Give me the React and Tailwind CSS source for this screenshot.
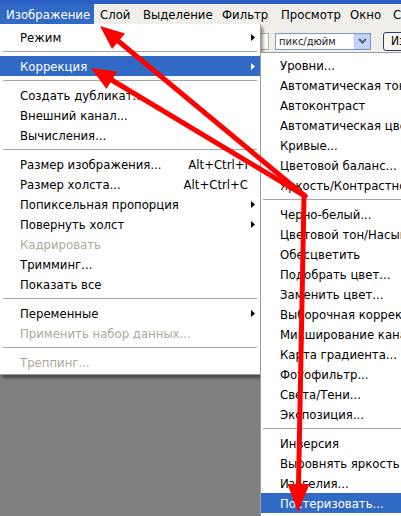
import React from "react";

const FONT = "font-['DejaVu_Sans_Condensed','Liberation_Sans',sans-serif]";

function Tri({ white }) {
  return (
    <svg width="4" height="7" viewBox="0 0 4 7" className="shrink-0">
      <polygon points="0,0 4,3.5 0,7" fill={white ? "#ffffff" : "#000000"} />
    </svg>
  );
}

function Item({ label, shortcut, arrow, disabled, active }) {
  const tone = active
    ? "bg-[#316ac5] text-white"
    : disabled
    ? "text-[#aca899]"
    : "text-black";
  return (
    <div className={`h-[20px] flex items-center pl-[20px] pr-[5px] ${tone}`}>
      <span className="flex-1 whitespace-nowrap">{label}</span>
      {shortcut && <span className="whitespace-nowrap mr-[7px]">{shortcut}</span>}
      {arrow && <Tri white={active} />}
    </div>
  );
}

function SubItem({ label, active }) {
  const tone = active ? "bg-[#316ac5] text-white" : "text-black";
  return (
    <div className={`h-[20px] flex items-center pl-[19px] ${tone}`}>
      <span className="whitespace-nowrap">{label}</span>
    </div>
  );
}

function Sep() {
  return (
    <div className="h-[9px] flex items-center px-[3px]">
      <div className="h-px w-full bg-[#a6a6a6]" />
    </div>
  );
}

function SubSep() {
  return (
    <div className="h-[9px] flex items-center px-[2px]">
      <div className="h-px w-full bg-[#a6a6a6]" />
    </div>
  );
}

export default function App() {
  return (
    <div className={`relative w-[401px] h-[516px] overflow-hidden bg-[#808080] flex flex-col text-[13px] leading-none ${FONT}`}>
      {/* title bar edge */}
      <div className="h-[4px] bg-[#2c5ec8] shrink-0" />
      {/* menu bar */}
      <div className="h-[20px] bg-[#f0efea] flex items-stretch text-black shrink-0 whitespace-nowrap">
        <div className="w-[94px] shrink-0 pl-[6px] flex items-center bg-[#316ac5] text-white">Изображение</div>
        <div className="w-[43px] shrink-0 pl-[6px] flex items-center">Слой</div>
        <div className="w-[79px] shrink-0 pl-[6px] flex items-center">Выделение</div>
        <div className="w-[59px] shrink-0 pl-[6px] flex items-center">Фильтр</div>
        <div className="w-[69px] shrink-0 pl-[6px] flex items-center">Просмотр</div>
        <div className="w-[43px] shrink-0 pl-[6px] flex items-center">Окно</div>
        <div className="shrink-0 pl-[6px] flex items-center">С</div>
      </div>
      {/* options bar */}
      <div className="h-[31px] bg-[#efeee8] flex items-center pl-[240px] pt-[3px] shrink-0">
        <div className="shrink-0 w-[29px] h-[17px] bg-white border border-[#b5b2a8]" />
        <div className="shrink-0 ml-[6px] w-[96px] h-[17px] bg-white border border-[#7f9db9] flex items-center">
          <span className="flex-1 pl-[3px] text-[11px] text-[#222] whitespace-nowrap">пикс/дюйм</span>
          <div className="w-[16px] h-[15px] bg-[#c4d5f8] border border-[#b9cbf3] flex items-center justify-center">
            <svg width="9" height="6" viewBox="0 0 9 6">
              <polyline points="1,1 4.5,4.5 8,1" fill="none" stroke="#4d6185" strokeWidth="2" />
            </svg>
          </div>
        </div>
        <div className="shrink-0 ml-[12px] w-[40px] h-[19px] rounded-[3px] border border-[#2f3f6a] bg-[#f6f5f0] flex items-center pl-[7px] text-[12px] text-black">
          Из
        </div>
      </div>
      <div className="flex-1 bg-[#808080]" />

      {/* Image menu */}
      <div className="absolute left-0 top-[24px] w-[261px] bg-white border-r border-b border-[#9d9d9d] pt-[3px] pb-[2px] shadow-[2px_3px_3px_rgba(0,0,0,0.45)]">
        <Item label="Режим" arrow />
        <Sep />
        <Item label="Коррекция" arrow active />
        <Sep />
        <Item label="Создать дубликат..." />
        <Item label="Внешний канал..." />
        <Item label="Вычисления..." />
        <Sep />
        <Item label="Размер изображения..." shortcut="Alt+Ctrl+I" />
        <Item label="Размер холста..." shortcut="Alt+Ctrl+C" />
        <Item label="Попиксельная пропорция" arrow />
        <Item label="Повернуть холст" arrow />
        <Item label="Кадрировать" disabled />
        <Item label="Тримминг..." />
        <Item label="Показать все" />
        <Sep />
        <Item label="Переменные" arrow />
        <Item label="Применить набор данных..." disabled />
        <Sep />
        <Item label="Треппинг..." disabled />
      </div>

      {/* Adjustments submenu */}
      <div className="absolute left-[260px] top-[52px] w-[170px] h-[470px] bg-white border-l border-t border-[#9d9d9d] pt-[2px] overflow-hidden">
        <SubItem label="Уровни..." />
        <SubItem label="Автоматическая тоновая коррекция" />
        <SubItem label="Автоконтраст" />
        <SubItem label="Автоматическая цветовая коррекция" />
        <SubItem label="Кривые..." />
        <SubItem label="Цветовой баланс..." />
        <SubItem label="Яркость/Контрастность..." />
        <SubSep />
        <SubItem label="Черно-белый..." />
        <SubItem label="Цветовой тон/Насыщенность..." />
        <SubItem label="Обесцветить" />
        <SubItem label="Подобрать цвет..." />
        <SubItem label="Заменить цвет..." />
        <SubItem label="Выборочная коррекция цвета..." />
        <SubItem label="Микширование каналов..." />
        <SubItem label="Карта градиента..." />
        <SubItem label="Фотофильтр..." />
        <SubItem label="Света/Тени..." />
        <SubItem label="Экспозиция..." />
        <SubSep />
        <SubItem label="Инверсия" />
        <SubItem label="Выровнять яркость" />
        <SubItem label="Изогелия..." />
        <SubItem label="Постеризовать..." active />
      </div>

      {/* red annotation arrows */}
      <svg className="absolute left-0 top-0 pointer-events-none" width="401" height="516" viewBox="0 0 401 516">
        <g stroke="#ff0000" strokeWidth="5" strokeLinecap="round" fill="none">
          <line x1="305" y1="196" x2="117" y2="40" />
          <line x1="305" y1="196" x2="110" y2="79" />
          <line x1="304" y1="197" x2="298.5" y2="486" />
        </g>
        <g fill="#ff0000">
          <polygon points="100,26 125,33.6 112,49" />
          <polygon points="91,68 117,71.6 106.5,89" />
          <polygon points="298,512 287.5,484 309.5,484" />
        </g>
      </svg>
    </div>
  );
}
